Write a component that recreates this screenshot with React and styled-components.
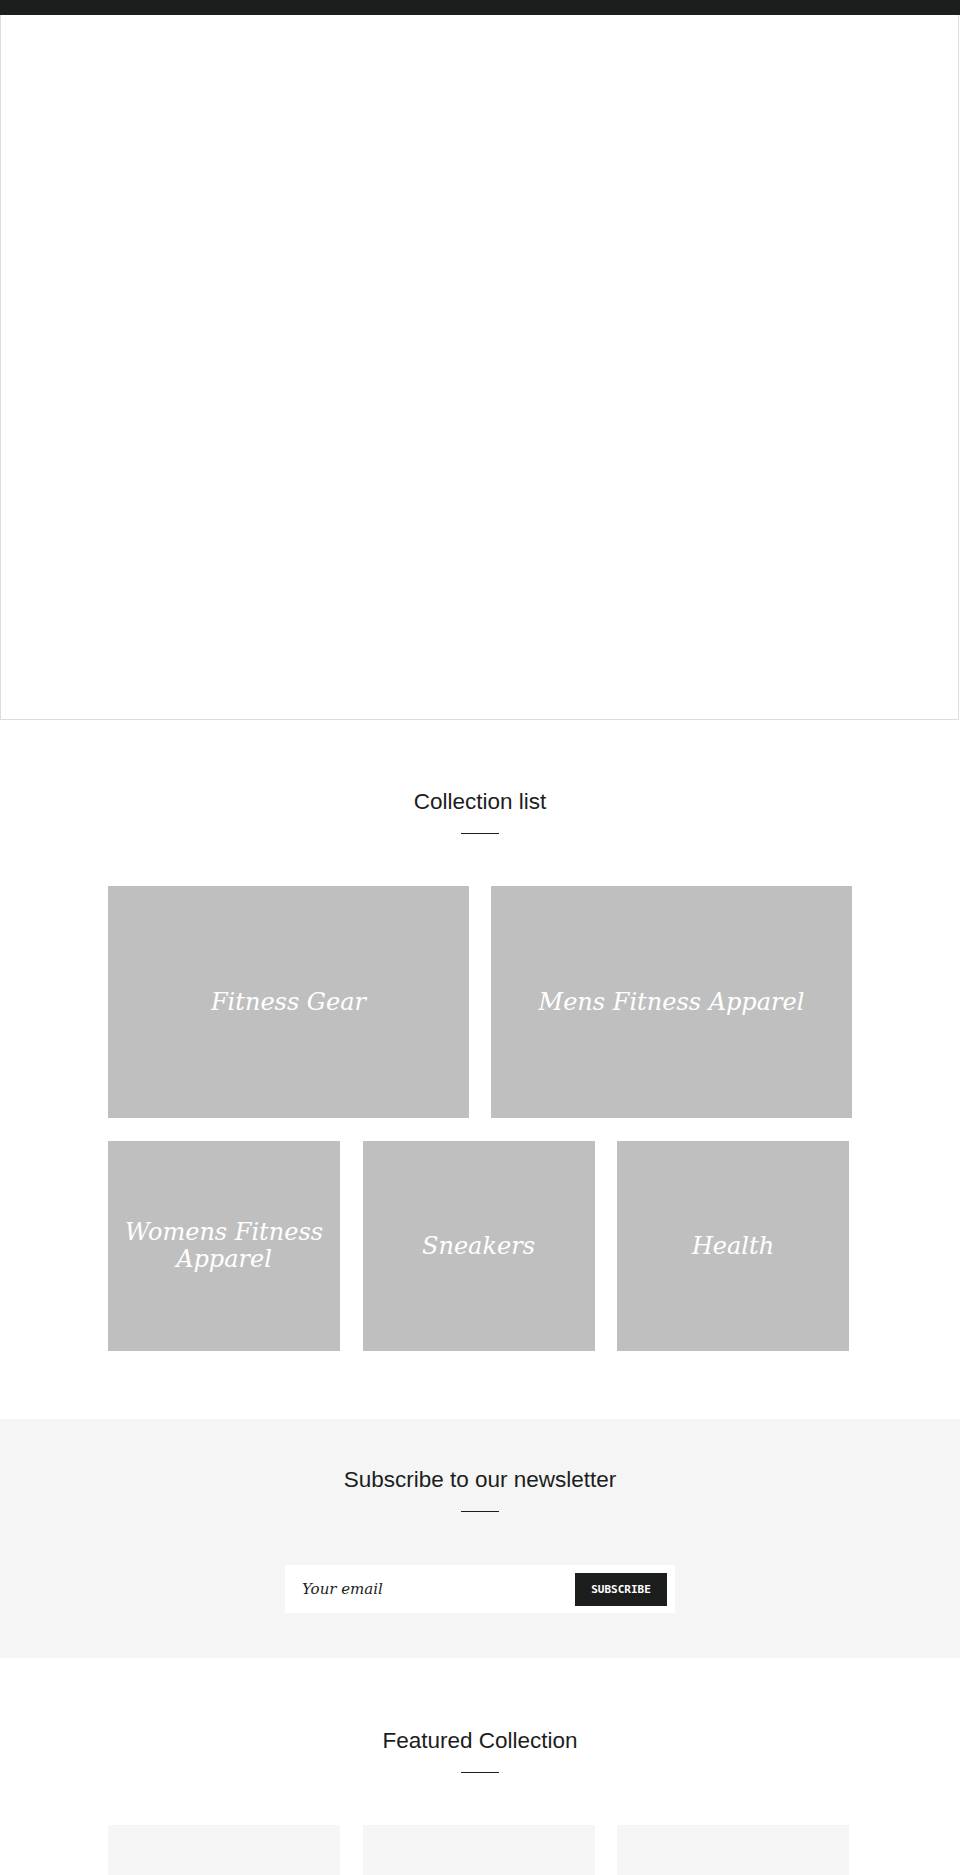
import React from "react";
import styled, { createGlobalStyle } from "styled-components";

const COLORS = {
  text: "#1c1d1d",
  tile: "#bfbfbf",
  border: "#dddddd",
  band: "#f5f5f5",
  placeholder: "#f6f6f6",
};

const collections = [
  { title: "Fitness Gear", wide: true },
  { title: "Mens Fitness Apparel", wide: true },
  { title: "Womens Fitness Apparel" },
  { title: "Sneakers" },
  { title: "Health" },
];

function SectionTitle({ children }) {
  return (
    <TitleBlock>
      <Title>{children}</Title>
      <Divider />
    </TitleBlock>
  );
}

export default function App() {
  const wideOnes = collections.filter((c) => c.wide);
  const smallOnes = collections.filter((c) => !c.wide);

  return (
    <>
      <GlobalStyle />
      <TopBar />
      <Hero />

      <CollectionSection>
        <SectionTitle>Collection list</SectionTitle>
        <Container>
          <TileGrid $cols={2}>
            {wideOnes.map((c) => (
              <Tile key={c.title} $height={232}>
                <TileLabel>{c.title}</TileLabel>
              </Tile>
            ))}
          </TileGrid>
          <TileGrid $cols={3}>
            {smallOnes.map((c) => (
              <Tile key={c.title} $height={210}>
                <TileLabel>{c.title}</TileLabel>
              </Tile>
            ))}
          </TileGrid>
        </Container>
      </CollectionSection>

      <NewsletterSection>
        <SectionTitle>Subscribe to our newsletter</SectionTitle>
        <NewsletterForm onSubmit={(e) => e.preventDefault()}>
          <EmailInput type="email" placeholder="Your email" />
          <SubscribeButton type="submit">Subscribe</SubscribeButton>
        </NewsletterForm>
      </NewsletterSection>

      <FeaturedSection>
        <SectionTitle>Featured Collection</SectionTitle>
        <Container>
          <TileGrid $cols={3}>
            {[1, 2, 3].map((n) => (
              <ProductCard key={n} />
            ))}
          </TileGrid>
        </Container>
      </FeaturedSection>
    </>
  );
}

const GlobalStyle = createGlobalStyle`
  * {
    box-sizing: border-box;
  }
  body {
    margin: 0;
    background: #fff;
    color: ${COLORS.text};
    font-family: "Liberation Sans", Arial, sans-serif;
  }
`;

const TopBar = styled.div`
  height: 15px;
  background-color: ${COLORS.text};
`;

const Hero = styled.div`
  height: 705px;
  width: 959px;
  border: 1px solid ${COLORS.border};
  border-top: none;
  background: #fff;
`;

const TitleBlock = styled.div`
  display: flex;
  flex-direction: column;
  align-items: center;
`;

const Title = styled.h2`
  margin: 0;
  font-family: "Liberation Sans", Arial, sans-serif;
  font-weight: 400;
  font-size: 22.5px;
  line-height: 27px;
  color: ${COLORS.text};
`;

const Divider = styled.hr`
  width: 38px;
  height: 1px;
  margin: 18px 0 0;
  border: none;
  background-color: ${COLORS.text};
`;

const CollectionSection = styled.section`
  padding: 68px 0 68px;
`;

const Container = styled.div`
  width: 744px;
  margin: 52px auto 0;
  display: flex;
  flex-direction: column;
  gap: 23px;
`;

const TileGrid = styled.div`
  display: grid;
  grid-template-columns: ${(p) =>
    p.$cols === 3 ? "repeat(3, 232px)" : `repeat(${p.$cols}, 1fr)`};
  column-gap: ${(p) => (p.$cols === 3 ? "22.5px" : "22px")};
`;

const Tile = styled.a`
  display: flex;
  align-items: center;
  justify-content: center;
  height: ${(p) => p.$height}px;
  padding: 0 15px;
  background-color: ${COLORS.tile};
  text-decoration: none;
  cursor: pointer;
`;

const TileLabel = styled.span`
  font-family: "DejaVu Serif", "Liberation Serif", serif;
  font-style: italic;
  font-size: 24px;
  line-height: 27px;
  color: #fff;
  text-align: center;
`;

const NewsletterSection = styled.section`
  background-color: ${COLORS.band};
  padding: 47px 0 45px;
  display: flex;
  flex-direction: column;
  align-items: center;
`;

const NewsletterForm = styled.form`
  display: flex;
  align-items: center;
  width: 390px;
  height: 48px;
  margin-top: 53px;
  padding: 0 8px 0 17px;
  background-color: #fff;
`;

const EmailInput = styled.input`
  flex: 1;
  min-width: 0;
  border: none;
  outline: none;
  background: transparent;
  font-family: "DejaVu Serif", "Liberation Serif", serif;
  font-style: italic;
  font-size: 15px;
  color: ${COLORS.text};
  padding: 0;

  &::placeholder {
    color: ${COLORS.text};
    opacity: 1;
  }
`;

const SubscribeButton = styled.button`
  width: 92px;
  height: 33px;
  border: none;
  background-color: ${COLORS.text};
  color: #fff;
  font-family: "DejaVu Sans Mono", "Liberation Mono", monospace;
  font-weight: 700;
  font-size: 11px;
  text-transform: uppercase;
  cursor: pointer;
`;

const FeaturedSection = styled.section`
  padding-top: 69px;
`;

const ProductCard = styled.div`
  height: 260px;
  background-color: ${COLORS.placeholder};
`;
